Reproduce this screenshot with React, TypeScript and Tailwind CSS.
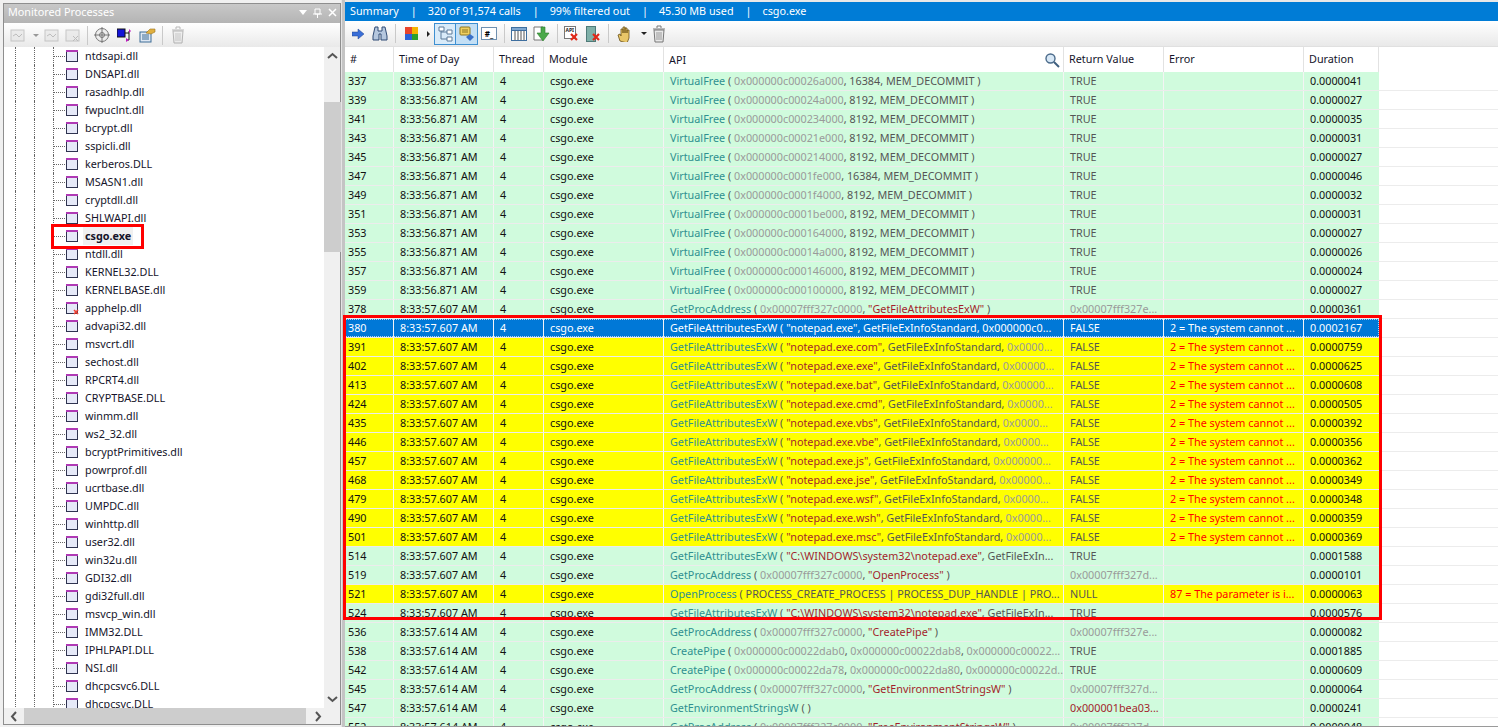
const F = "font-['Noto_Sans',sans-serif]";

const dlls = [
  "ntdsapi.dll", "DNSAPI.dll", "rasadhlp.dll", "fwpuclnt.dll", "bcrypt.dll", "sspicli.dll", "kerberos.DLL", "MSASN1.dll",
  "cryptdll.dll", "SHLWAPI.dll", "csgo.exe", "ntdll.dll", "KERNEL32.DLL", "KERNELBASE.dll", "apphelp.dll", "advapi32.dll",
  "msvcrt.dll", "sechost.dll", "RPCRT4.dll", "CRYPTBASE.DLL", "winmm.dll", "ws2_32.dll", "bcryptPrimitives.dll", "powrprof.dll",
  "ucrtbase.dll", "UMPDC.dll", "winhttp.dll", "user32.dll", "win32u.dll", "GDI32.dll", "gdi32full.dll", "msvcp_win.dll",
  "IMM32.DLL", "IPHLPAPI.DLL", "NSI.dll", "dhcpcsvc6.DLL", "dhcpcsvc.DLL",
];

type Row = { n: number; t: string; name: string; args: string; ret?: string; err?: string; dur: string; kind?: "y" | "s" };

const vf = (n: number, a: string, s: string, d: string): Row => ({
  n, t: "8:33:56.871 AM", name: "VirtualFree", args: `( 0x000000c000${a}, ${s}, MEM_DECOMMIT )`, ret: "TRUE", dur: d,
});
const nf = "2 = The system cannot ...";
const gf = (n: number, ext: string, tail: string, d: string): Row => ({
  n, t: "8:33:57.607 AM", name: "GetFileAttributesExW", args: `( "notepad.exe${ext}", GetFileExInfoStandard, ${tail}`, ret: "FALSE", err: nf, dur: d, kind: "y",
});

const rows: Row[] = [
  vf(337, "26a000", "16384", "0.0000041"),
  vf(339, "24a000", "8192", "0.0000027"),
  vf(341, "234000", "8192", "0.0000035"),
  vf(343, "21e000", "8192", "0.0000031"),
  vf(345, "214000", "8192", "0.0000027"),
  vf(347, "1fe000", "16384", "0.0000046"),
  vf(349, "1f4000", "8192", "0.0000032"),
  vf(351, "1be000", "8192", "0.0000031"),
  vf(353, "164000", "8192", "0.0000027"),
  vf(355, "14a000", "8192", "0.0000026"),
  vf(357, "146000", "8192", "0.0000024"),
  vf(359, "100000", "8192", "0.0000027"),
  { n: 378, t: "8:33:57.607 AM", name: "GetProcAddress", args: '( 0x00007fff327c0000, "GetFileAttributesExW" )', ret: "0x00007fff327e...", dur: "0.0000361" },
  { n: 380, t: "8:33:57.607 AM", name: "GetFileAttributesExW", args: '( "notepad.exe", GetFileExInfoStandard, 0x000000c0...', ret: "FALSE", err: nf, dur: "0.0002167", kind: "s" },
  gf(391, ".com", "0x0000...", "0.0000759"),
  gf(402, ".exe", "0x00000...", "0.0000625"),
  gf(413, ".bat", "0x00000...", "0.0000608"),
  gf(424, ".cmd", "0x0000...", "0.0000505"),
  gf(435, ".vbs", "0x0000...", "0.0000392"),
  gf(446, ".vbe", "0x0000...", "0.0000356"),
  gf(457, ".js", "0x000000...", "0.0000362"),
  gf(468, ".jse", "0x00000...", "0.0000349"),
  gf(479, ".wsf", "0x0000...", "0.0000348"),
  gf(490, ".wsh", "0x0000...", "0.0000359"),
  gf(501, ".msc", "0x0000...", "0.0000369"),
  { n: 514, t: "8:33:57.607 AM", name: "GetFileAttributesExW", args: '( "C:\\WINDOWS\\system32\\notepad.exe", GetFileExIn...', ret: "TRUE", dur: "0.0001588" },
  { n: 519, t: "8:33:57.607 AM", name: "GetProcAddress", args: '( 0x00007fff327c0000, "OpenProcess" )', ret: "0x00007fff327d...", dur: "0.0000101" },
  { n: 521, t: "8:33:57.607 AM", name: "OpenProcess", args: "( PROCESS_CREATE_PROCESS | PROCESS_DUP_HANDLE | PRO...", ret: "NULL", err: "87 = The parameter is i...", dur: "0.0000063", kind: "y" },
  { n: 524, t: "8:33:57.607 AM", name: "GetFileAttributesExW", args: '( "C:\\WINDOWS\\system32\\notepad.exe", GetFileExIn...', ret: "TRUE", dur: "0.0000576" },
  { n: 536, t: "8:33:57.614 AM", name: "GetProcAddress", args: '( 0x00007fff327c0000, "CreatePipe" )', ret: "0x00007fff327e...", dur: "0.0000082" },
  { n: 538, t: "8:33:57.614 AM", name: "CreatePipe", args: "( 0x000000c00022dab0, 0x000000c00022dab8, 0x000000c00022...", ret: "TRUE", dur: "0.0001885" },
  { n: 542, t: "8:33:57.614 AM", name: "CreatePipe", args: "( 0x000000c00022da78, 0x000000c00022da80, 0x000000c00022d...", ret: "TRUE", dur: "0.0000609" },
  { n: 545, t: "8:33:57.614 AM", name: "GetProcAddress", args: '( 0x00007fff327c0000, "GetEnvironmentStringsW" )', ret: "0x00007fff327d...", dur: "0.0000064" },
  { n: 547, t: "8:33:57.614 AM", name: "GetEnvironmentStringsW", args: "( )", ret: "0x000001bea03...", dur: "0.0000241" },
  { n: 552, t: "8:33:57.614 AM", name: "GetProcAddress", args: '( 0x00007fff327c0000, "FreeEnvironmentStringsW" )', ret: "0x00007fff327d...", dur: "0.0000048" },
];

function Args({ text, sel }: { text: string; sel: boolean }) {
  if (sel) return <span>{text}</span>;
  const parts = text.split(/("[^"]*"|0x[0-9a-f]+\.*)/);
  return (
    <>
      {parts.map((p, i) =>
        p.startsWith('"') ? (
          <span key={i} className="text-[#a31f2c]">{p}</span>
        ) : p.startsWith("0x") ? (
          <span key={i} className="text-[#9a9a9a]">{p}</span>
        ) : (
          <span key={i} className="text-[#555555]">{p}</span>
        ),
      )}
    </>
  );
}

function Cell({ w, children, cls = "pl-[6px]" }: { w: string; children?: React.ReactNode; cls?: string }) {
  return <div className={`${w} shrink-0 h-full border-r border-[#f4f4f4] whitespace-nowrap overflow-hidden leading-[18px] ${cls}`}>{children}</div>;
}

function TableRow({ r }: { r: Row }) {
  const sel = r.kind === "s";
  const bg = sel ? "bg-[#0078d7] text-white outline outline-1 outline-dotted -outline-offset-1 outline-white/70" : r.kind === "y" ? "bg-[#ffff00] text-[#111111]" : "bg-[#d0fbdd] text-[#111111]";
  const retCol = sel ? "" : r.ret?.startsWith("0x000001") ? "text-[#a31f2c]" : r.ret?.startsWith("0x") ? "text-[#9a9a9a]" : "text-[#555555]";
  const errCol = sel ? "" : "text-[#ff0000]";
  return (
    <div className="flex h-[19px] shrink-0 border-b border-[#ececec]">
      <div className={`flex h-full w-[1034px] shrink-0 ${bg}`}>
        <Cell w="w-[49px]" cls="pl-[3px]">{r.n}</Cell>
        <Cell w="w-[100px]">{r.t}</Cell>
        <Cell w="w-[50px]">4</Cell>
        <Cell w="w-[120px]">csgo.exe</Cell>
        <Cell w="w-[400px]">
          <span className={sel ? "" : "text-[#2f9090]"}>{r.name}</span> <Args text={r.args} sel={sel} />
        </Cell>
        <Cell w="w-[100px]" cls={`pl-[6px] ${retCol}`}>{r.ret}</Cell>
        <Cell w="w-[140px]" cls={`pl-[6px] ${errCol}`}>{r.err}</Cell>
        <Cell w="w-[75px]" cls="pl-[6px] border-r-0">{r.dur}</Cell>
      </div>
    </div>
  );
}

function DllIcon({ bad }: { bad?: boolean }) {
  return (
    <svg width="14" height="14" viewBox="0 0 14 14" className="shrink-0">
      <rect x="1.5" y="1.5" width="11" height="11" fill="#e6e9f8" stroke="#2f3350" />
      <path d="M1 1h12v2H1z" fill="#b03ab5" />
      {bad && <path d="M9 9l4 4M13 9l-4 4" stroke="#f04030" strokeWidth="1.6" />}
    </svg>
  );
}

function TreeRow({ name }: { name: string }) {
  const hit = name === "csgo.exe";
  return (
    <div className="flex items-center h-[18px] shrink-0 pl-[11px]">
      <div className="w-[19px] h-full border-l border-dotted border-[#666666]" />
      <div className="w-[19px] h-full border-l border-dotted border-[#666666]" />
      <div className="w-[12px] h-full border-l border-dotted border-[#666666] flex items-center">
        <div className="w-full border-t border-dotted border-[#666666]" />
      </div>
      <DllIcon bad={name === "apphelp.dll"} />
      <span className={`ml-[4px] px-[2px] leading-[18px] whitespace-nowrap text-[#14142a] ${hit ? "font-bold bg-[#f0f0f0]" : ""}`}>{name}</span>
    </div>
  );
}

function Chevron({ d, cls = "" }: { d: string; cls?: string }) {
  return (
    <svg width="17" height="17" viewBox="0 0 17 17" className={`shrink-0 ${cls}`}>
      <path d={d} fill="none" stroke="#555555" strokeWidth="2" />
    </svg>
  );
}

function Sep() {
  return <div className="w-px h-[19px] bg-[#c9c9c9] shrink-0" />;
}

function Trash() {
  return (
    <svg width="16" height="18" viewBox="0 0 16 18" className="shrink-0">
      <path d="M2 4h12M6 3V1h4v2" fill="none" stroke="#777777" />
      <path d="M3 5h10l-1 12H4z" fill="#e8e8e8" stroke="#777777" />
      <path d="M6 7v8M8 7v8M10 7v8" stroke="#999999" />
    </svg>
  );
}

function LeftToolbar() {
  return (
    <div className="flex items-center h-[24px] shrink-0 pl-[6px] bg-gradient-to-b from-white to-[#e9e9e9]">
      <svg width="16" height="14" viewBox="0 0 16 14" className="shrink-0 opacity-60">
        <rect x="1" y="2" width="13" height="11" fill="#e4e4e4" stroke="#a8a8a8" />
        <path d="M3 8l3-2 3 3 3-3" fill="none" stroke="#999999" />
      </svg>
      <div className="ml-[7px] w-0 h-0 border-x-[3px] border-x-transparent border-t-[3px] border-t-[#999999]" />
      <svg width="16" height="14" viewBox="0 0 16 14" className="ml-[5px] shrink-0 opacity-60">
        <rect x="1" y="2" width="13" height="11" fill="#e4e4e4" stroke="#a8a8a8" />
        <path d="M3 8l3-2 3 3 3-3" fill="none" stroke="#999999" />
      </svg>
      <svg width="16" height="14" viewBox="0 0 16 14" className="ml-[5px] shrink-0 opacity-60">
        <rect x="1" y="2" width="13" height="11" fill="#e4e4e4" stroke="#a8a8a8" />
        <path d="M8 8l5 5M13 8l-5 5" stroke="#999999" />
      </svg>
      <div className="ml-[6px]"><Sep /></div>
      <svg width="16" height="16" viewBox="0 0 16 16" className="ml-[6px] shrink-0">
        <circle cx="8" cy="8" r="6.5" fill="#eeeeee" stroke="#777777" />
        <circle cx="8" cy="8" r="2.5" fill="none" stroke="#777777" />
        <path d="M8 0v16M0 8h16" stroke="#777777" />
      </svg>
      <svg width="15" height="15" viewBox="0 0 15 15" className="ml-[7px] shrink-0">
        <rect x="0" y="1" width="8" height="8" fill="#1414d8" stroke="#111111" />
        <path d="M8 5h4v7H9M12 3v2" fill="none" stroke="#111111" />
        <path d="M12 1l2 2-2 2zM9 10l3 2-3 2z" fill="#c020c0" />
      </svg>
      <svg width="17" height="15" viewBox="0 0 17 15" className="ml-[7px] shrink-0">
        <rect x="1" y="4" width="11" height="10" fill="#dfe8f3" stroke="#3d6c96" />
        <path d="M3 7h7M3 9h7M3 11h7" stroke="#3d6c96" />
        <path d="M7 5l4-4h5v3l-4 2z" fill="#e0b040" stroke="#9a7420" strokeWidth=".6" />
      </svg>
      <div className="ml-[6px]"><Sep /></div>
      <div className="ml-[7px] opacity-50"><Trash /></div>
    </div>
  );
}

function RightToolbar() {
  return (
    <div className="flex items-center h-[25px] shrink-0 pl-[7px] bg-gradient-to-b from-white to-[#e9e9e9]">
      <svg width="12" height="12" viewBox="0 0 12 12" className="shrink-0">
        <path d="M0 4h6V1l6 5-6 5V8H0z" fill="#3a6fd8" stroke="#23448c" strokeWidth=".5" />
      </svg>
      <svg width="16" height="15" viewBox="0 0 16 15" className="ml-[8px] shrink-0">
        <path d="M3 1h3v4h4V1h3l2 9v4H9V8H7v6H1v-4z" fill="#b5c7de" stroke="#2f4a74" />
      </svg>
      <div className="ml-[7px]"><Sep /></div>
      <div className="ml-[9px] grid grid-cols-2 w-[13px] h-[13px] shrink-0">
        <div className="bg-[#e8442c]" /><div className="bg-[#f4b400]" /><div className="bg-[#2a62d8]" /><div className="bg-[#2ca02c]" />
      </div>
      <div className="ml-[9px] w-0 h-0 border-y-[3px] border-y-transparent border-l-[3px] border-l-[#222222]" />
      <div className="ml-[4px] w-[22px] h-[22px] border border-[#3d8fd1] bg-[#d9ebf9] flex items-center justify-center shrink-0">
        <svg width="16" height="16" viewBox="0 0 16 16">
          <path d="M2 1h5v4H2zM10 4h5v4h-5zM10 11h5v4h-5z" fill="#fff" stroke="#5c7a99" />
          <path d="M4 5v8h6M4 6h6" fill="none" stroke="#5c7a99" />
        </svg>
      </div>
      <div className="w-[22px] h-[22px] border border-l-0 border-[#3d8fd1] bg-[#c3dff5] flex items-center justify-center shrink-0">
        <svg width="16" height="16" viewBox="0 0 16 16">
          <rect x="1" y="1" width="10" height="8" rx="1" fill="#f0d060" stroke="#8c7420" />
          <path d="M3 4h6M3 6h6" stroke="#8c7420" />
          <path d="M11 8l4 3-4 4-4-4z" fill="#3a70c8" />
        </svg>
      </div>
      <div className="ml-[3px] w-[16px] h-[13px] border border-[#6f90b0] bg-white text-[8px] leading-[11px] font-bold text-center shrink-0">#_</div>
      <div className="ml-[7px]"><Sep /></div>
      <svg width="16" height="14" viewBox="0 0 16 14" className="ml-[6px] shrink-0">
        <rect x=".5" y=".5" width="15" height="13" fill="#ffffff" stroke="#3f6f9f" />
        <rect x=".5" y=".5" width="15" height="3" fill="#7ea7d0" stroke="#3f6f9f" />
        <path d="M4 4v9M7 4v9M10 4v9M13 4v9" stroke="#555555" />
      </svg>
      <svg width="17" height="16" viewBox="0 0 17 16" className="ml-[6px] shrink-0">
        <path d="M1 1h9v13H1z" fill="#ffffff" stroke="#777777" />
        <path d="M8 1h4v6h4l-6 8-6-8h4z" fill="#4aa84a" stroke="#2a7a2a" strokeWidth=".6" />
      </svg>
      <div className="ml-[7px]"><Sep /></div>
      <svg width="15" height="16" viewBox="0 0 15 16" className="ml-[6px] shrink-0">
        <rect x=".5" y=".5" width="11" height="12" fill="#ffffff" stroke="#777777" />
        <text x="1.5" y="6" fontSize="5" fontWeight="bold" fill="#222222">API</text>
        <path d="M7 8l6 6M13 8l-6 6" stroke="#e02818" strokeWidth="2.2" />
      </svg>
      <svg width="15" height="16" viewBox="0 0 15 16" className="ml-[7px] shrink-0">
        <rect x=".5" y=".5" width="9" height="15" fill="#7fb0a8" stroke="#4f7a78" />
        <path d="M7 8l6 6M13 8l-6 6" stroke="#e02818" strokeWidth="2.2" />
      </svg>
      <div className="ml-[7px]"><Sep /></div>
      <svg width="15" height="16" viewBox="0 0 15 16" className="ml-[8px] shrink-0">
        <path d="M3 15L1 9l2-1 1 2V3h2v4-6h2v6-5h2v5-3h2v8l-2 5z" fill="#e8c668" stroke="#6a5018" strokeWidth=".8" />
      </svg>
      <div className="ml-[9px] w-0 h-0 border-x-[3px] border-x-transparent border-t-[3px] border-t-[#222222]" />
      <div className="ml-[4px]"><Trash /></div>
    </div>
  );
}

function Header() {
  const cols: [string, string][] = [
    ["#", "w-[49px]"], ["Time of Day", "w-[100px]"], ["Thread", "w-[50px]"], ["Module", "w-[120px]"],
  ];
  return (
    <div className="flex h-[25px] shrink-0 bg-white text-[#14142a] leading-[24px]">
      {cols.map(([c, w]) => (
        <div key={c} className={`${w} shrink-0 pl-[5px] border-r border-[#e2e2e2]`}>{c}</div>
      ))}
      <div className="w-[400px] shrink-0 pl-[5px] pr-[3px] border-r border-[#e2e2e2] flex items-center justify-between">
        API
        <svg width="16" height="16" viewBox="0 0 16 16">
          <circle cx="6.5" cy="6.5" r="4.5" fill="#d8e8f6" stroke="#4a6a8a" strokeWidth="1.4" />
          <path d="M10 10l5 5" stroke="#3f5f7f" strokeWidth="2" />
        </svg>
      </div>
      <div className="w-[100px] shrink-0 pl-[5px] border-r border-[#e2e2e2]">Return Value</div>
      <div className="w-[140px] shrink-0 pl-[5px] border-r border-[#e2e2e2]">Error</div>
      <div className="w-[75px] shrink-0 pl-[5px] border-r border-[#e2e2e2]">Duration</div>
    </div>
  );
}

export default function App() {
  return (
    <div className={`${F} relative flex w-[1498px] h-[727px] overflow-hidden bg-[#f0f0f0] text-[10.8px]`}>
      {/* Monitored Processes */}
      <div className="w-[341px] shrink-0 h-full flex flex-col pl-[3px] pt-[3px] pb-[2px]">
        <div className="h-full flex flex-col border border-[#8e8e8e]">
          <div className="h-[19px] shrink-0 flex items-center justify-between bg-gradient-to-b from-[#c8c8c8] to-[#b4b4b4] text-white pl-[4px] pr-[3px] pb-[2px]">
            <span>Monitored Processes</span>
            <div className="flex items-center gap-[6px]">
              <div className="w-0 h-0 border-x-[4px] border-x-transparent border-t-[5px] border-t-white" />
              <svg width="9" height="10" viewBox="0 0 9 10"><path d="M2 1h5v5H2zM0 6h9M4.5 6v4" fill="none" stroke="#fff" /></svg>
              <svg width="9" height="9" viewBox="0 0 9 9"><path d="M1 1l7 7M8 1l-7 7" stroke="#fff" strokeWidth="1.5" /></svg>
            </div>
          </div>
          <LeftToolbar />
          <div className="flex flex-1 min-h-0">
            <div className="w-[320px] shrink-0 bg-white flex flex-col overflow-hidden">
              {dlls.map((d) => <TreeRow key={d} name={d} />)}
            </div>
            <div className="flex-1 flex flex-col items-center">
              <Chevron d="M4 11l4.5-4 4.5 4" />
              <div className="h-[38px] shrink-0" />
              <div className="w-full h-[150px] shrink-0 bg-[#cdcdcd]" />
              <div className="flex-1" />
              <Chevron d="M4 6l4.5 4 4.5-4" />
            </div>
          </div>
          <div className="h-[16px] shrink-0 flex items-center">
            <Chevron d="M11 4L7 8.5l4 4.5" cls="ml-[1px]" />
            <div className="w-[282px] h-full bg-[#cdcdcd] ml-[2px]" />
            <Chevron d="M6 4l4 4.5L6 13" cls="ml-[4px]" />
          </div>
        </div>
      </div>
      <div className="w-[4px] shrink-0 h-full bg-[#c4c4c4] border-l border-[#e4e4e4]" />

      {/* Summary pane */}
      <div className="flex-1 h-full flex flex-col">
        <div className="h-[21px] shrink-0 bg-[#007cd6] border-t-[2px] border-[#e8e8e8] flex items-center text-white pl-[5px]">
          <span>Summary</span>
          <span className="ml-[12px]">|</span>
          <span className="ml-[11px]">320 of 91,574 calls</span>
          <span className="ml-[12px]">|</span>
          <span className="ml-[11px]">99% filtered out</span>
          <span className="ml-[12px]">|</span>
          <span className="ml-[11px]">45.30 MB used</span>
          <span className="ml-[12px]">|</span>
          <span className="ml-[11px]">csgo.exe</span>
        </div>
        <RightToolbar />
        <div className="flex-1 min-h-0 flex flex-col bg-white border-t border-[#e0e0e0] border-b border-b-[#9a9a9a] overflow-hidden">
          <Header />
          {rows.map((r) => <TableRow key={r.n} r={r} />)}
        </div>
      </div>

      {/* hand-drawn red highlights */}
      <div className="absolute left-[51px] top-[224px] w-[93px] h-[25px] border-[3px] border-[#ff0000]" />
      <div className="absolute left-[343px] top-[315px] w-[1039px] h-[305px] border-[3px] border-[#ff0000]" />
    </div>
  );
}
